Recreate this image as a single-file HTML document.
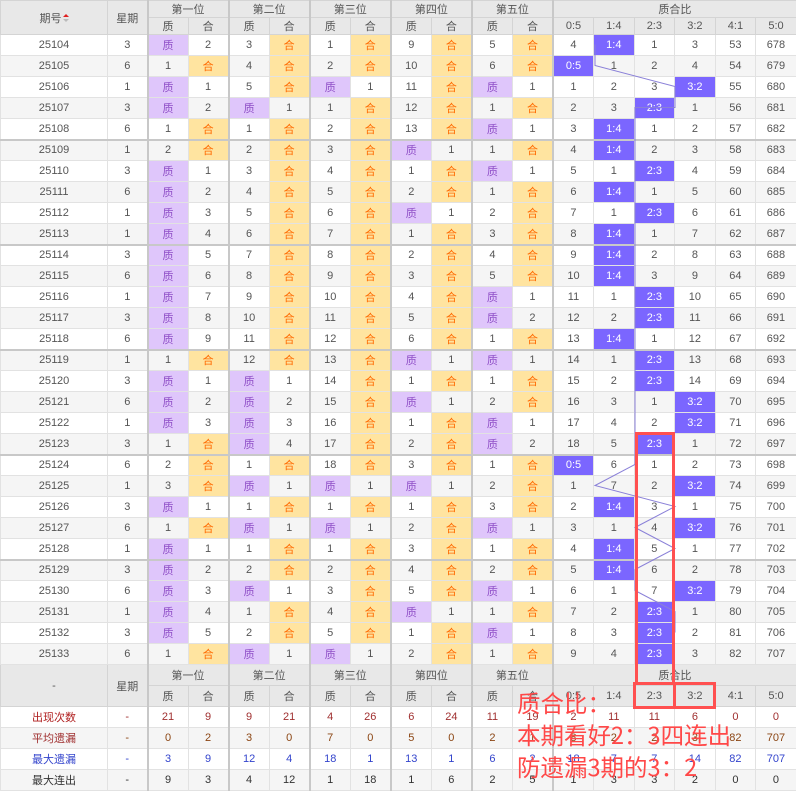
<!DOCTYPE html>
<html><head><meta charset="utf-8">
<style>
*{margin:0;padding:0;box-sizing:border-box}
body{width:796px;height:790px;background:#fff;overflow:hidden;position:relative;font-family:"Liberation Sans","Noto Sans CJK SC",sans-serif;font-size:11px;color:#555}
table{border-collapse:collapse;table-layout:fixed;width:796px;position:absolute;left:0;top:0}
td,th{text-align:center;vertical-align:middle;border:1px solid #e2e2e2;height:21px;font-weight:normal;white-space:nowrap;overflow:hidden;padding:0}
thead th,.fh th{background:#e8e8e8;border-color:#d4d4d4;height:17px;color:#555}
.fh th{height:21px}
tbody tr:nth-child(even) td{background:#f5f5f5}
tbody tr td.z{background:#dfc6fb;color:#9050c8}
tbody tr td.h{background:#ffe4a0;color:#ff6a00}
tbody tr td.r{background:#7b66ff;color:#fff}
tr.g td{border-top:2px solid #c8c8c8}
td.b,th.b{border-left:2px solid #c8c8c8}
.st td{height:21px}
.c1 td{color:#a03030}.c2 td{color:#8b4513}.c3 td{color:#3344cc}.c4 td{color:#333}
.c1 td:first-child{color:#b02020}.c2 td:first-child{color:#a03030}.c3 td:first-child{color:#3344cc}
.arr{display:inline-block;vertical-align:middle;margin-left:1px;width:6px;height:9px;position:relative}
.arr:before{content:"";position:absolute;left:0;top:0;border:3px solid transparent;border-bottom:3px solid #e02020;border-top:0}
.arr:after{content:"";position:absolute;left:0;top:5px;border:3px solid transparent;border-top:3px solid #bbb;border-bottom:0}
.note{position:absolute;left:517px;top:686px;color:#ff4848;font-size:23.5px;line-height:32px;font-family:"Noto Sans CJK SC",sans-serif;white-space:nowrap}
</style></head><body>
<table>
<colgroup><col style="width:107px"><col style="width:40px"><col span="16" style="width:40.56px"></colgroup>
<thead>
<tr><th rowspan="2">期号<span class="arr"></span></th><th rowspan="2">星期</th><th colspan="2" class="b">第一位</th><th colspan="2" class="b">第二位</th><th colspan="2" class="b">第三位</th><th colspan="2" class="b">第四位</th><th colspan="2" class="b">第五位</th><th colspan="6" class="b">质合比</th></tr>
<tr><th class="b">质</th><th>合</th><th class="b">质</th><th>合</th><th class="b">质</th><th>合</th><th class="b">质</th><th>合</th><th class="b">质</th><th>合</th><th class="b">0:5</th><th>1:4</th><th>2:3</th><th>3:2</th><th>4:1</th><th>5:0</th></tr>
</thead>
<tbody>
<tr><td>25104</td><td>3</td><td class="z b">质</td><td>2</td><td class="b">3</td><td class="h">合</td><td class="b">1</td><td class="h">合</td><td class="b">9</td><td class="h">合</td><td class="b">5</td><td class="h">合</td><td class="b">4</td><td class="r">1:4</td><td>1</td><td>3</td><td>53</td><td>678</td></tr>
<tr><td>25105</td><td>6</td><td class="b">1</td><td class="h">合</td><td class="b">4</td><td class="h">合</td><td class="b">2</td><td class="h">合</td><td class="b">10</td><td class="h">合</td><td class="b">6</td><td class="h">合</td><td class="r b">0:5</td><td>1</td><td>2</td><td>4</td><td>54</td><td>679</td></tr>
<tr><td>25106</td><td>1</td><td class="z b">质</td><td>1</td><td class="b">5</td><td class="h">合</td><td class="z b">质</td><td>1</td><td class="b">11</td><td class="h">合</td><td class="z b">质</td><td>1</td><td class="b">1</td><td>2</td><td>3</td><td class="r">3:2</td><td>55</td><td>680</td></tr>
<tr><td>25107</td><td>3</td><td class="z b">质</td><td>2</td><td class="z b">质</td><td>1</td><td class="b">1</td><td class="h">合</td><td class="b">12</td><td class="h">合</td><td class="b">1</td><td class="h">合</td><td class="b">2</td><td>3</td><td class="r">2:3</td><td>1</td><td>56</td><td>681</td></tr>
<tr><td>25108</td><td>6</td><td class="b">1</td><td class="h">合</td><td class="b">1</td><td class="h">合</td><td class="b">2</td><td class="h">合</td><td class="b">13</td><td class="h">合</td><td class="z b">质</td><td>1</td><td class="b">3</td><td class="r">1:4</td><td>1</td><td>2</td><td>57</td><td>682</td></tr>
<tr class="g"><td>25109</td><td>1</td><td class="b">2</td><td class="h">合</td><td class="b">2</td><td class="h">合</td><td class="b">3</td><td class="h">合</td><td class="z b">质</td><td>1</td><td class="b">1</td><td class="h">合</td><td class="b">4</td><td class="r">1:4</td><td>2</td><td>3</td><td>58</td><td>683</td></tr>
<tr><td>25110</td><td>3</td><td class="z b">质</td><td>1</td><td class="b">3</td><td class="h">合</td><td class="b">4</td><td class="h">合</td><td class="b">1</td><td class="h">合</td><td class="z b">质</td><td>1</td><td class="b">5</td><td>1</td><td class="r">2:3</td><td>4</td><td>59</td><td>684</td></tr>
<tr><td>25111</td><td>6</td><td class="z b">质</td><td>2</td><td class="b">4</td><td class="h">合</td><td class="b">5</td><td class="h">合</td><td class="b">2</td><td class="h">合</td><td class="b">1</td><td class="h">合</td><td class="b">6</td><td class="r">1:4</td><td>1</td><td>5</td><td>60</td><td>685</td></tr>
<tr><td>25112</td><td>1</td><td class="z b">质</td><td>3</td><td class="b">5</td><td class="h">合</td><td class="b">6</td><td class="h">合</td><td class="z b">质</td><td>1</td><td class="b">2</td><td class="h">合</td><td class="b">7</td><td>1</td><td class="r">2:3</td><td>6</td><td>61</td><td>686</td></tr>
<tr><td>25113</td><td>1</td><td class="z b">质</td><td>4</td><td class="b">6</td><td class="h">合</td><td class="b">7</td><td class="h">合</td><td class="b">1</td><td class="h">合</td><td class="b">3</td><td class="h">合</td><td class="b">8</td><td class="r">1:4</td><td>1</td><td>7</td><td>62</td><td>687</td></tr>
<tr class="g"><td>25114</td><td>3</td><td class="z b">质</td><td>5</td><td class="b">7</td><td class="h">合</td><td class="b">8</td><td class="h">合</td><td class="b">2</td><td class="h">合</td><td class="b">4</td><td class="h">合</td><td class="b">9</td><td class="r">1:4</td><td>2</td><td>8</td><td>63</td><td>688</td></tr>
<tr><td>25115</td><td>6</td><td class="z b">质</td><td>6</td><td class="b">8</td><td class="h">合</td><td class="b">9</td><td class="h">合</td><td class="b">3</td><td class="h">合</td><td class="b">5</td><td class="h">合</td><td class="b">10</td><td class="r">1:4</td><td>3</td><td>9</td><td>64</td><td>689</td></tr>
<tr><td>25116</td><td>1</td><td class="z b">质</td><td>7</td><td class="b">9</td><td class="h">合</td><td class="b">10</td><td class="h">合</td><td class="b">4</td><td class="h">合</td><td class="z b">质</td><td>1</td><td class="b">11</td><td>1</td><td class="r">2:3</td><td>10</td><td>65</td><td>690</td></tr>
<tr><td>25117</td><td>3</td><td class="z b">质</td><td>8</td><td class="b">10</td><td class="h">合</td><td class="b">11</td><td class="h">合</td><td class="b">5</td><td class="h">合</td><td class="z b">质</td><td>2</td><td class="b">12</td><td>2</td><td class="r">2:3</td><td>11</td><td>66</td><td>691</td></tr>
<tr><td>25118</td><td>6</td><td class="z b">质</td><td>9</td><td class="b">11</td><td class="h">合</td><td class="b">12</td><td class="h">合</td><td class="b">6</td><td class="h">合</td><td class="b">1</td><td class="h">合</td><td class="b">13</td><td class="r">1:4</td><td>1</td><td>12</td><td>67</td><td>692</td></tr>
<tr class="g"><td>25119</td><td>1</td><td class="b">1</td><td class="h">合</td><td class="b">12</td><td class="h">合</td><td class="b">13</td><td class="h">合</td><td class="z b">质</td><td>1</td><td class="z b">质</td><td>1</td><td class="b">14</td><td>1</td><td class="r">2:3</td><td>13</td><td>68</td><td>693</td></tr>
<tr><td>25120</td><td>3</td><td class="z b">质</td><td>1</td><td class="z b">质</td><td>1</td><td class="b">14</td><td class="h">合</td><td class="b">1</td><td class="h">合</td><td class="b">1</td><td class="h">合</td><td class="b">15</td><td>2</td><td class="r">2:3</td><td>14</td><td>69</td><td>694</td></tr>
<tr><td>25121</td><td>6</td><td class="z b">质</td><td>2</td><td class="z b">质</td><td>2</td><td class="b">15</td><td class="h">合</td><td class="z b">质</td><td>1</td><td class="b">2</td><td class="h">合</td><td class="b">16</td><td>3</td><td>1</td><td class="r">3:2</td><td>70</td><td>695</td></tr>
<tr><td>25122</td><td>1</td><td class="z b">质</td><td>3</td><td class="z b">质</td><td>3</td><td class="b">16</td><td class="h">合</td><td class="b">1</td><td class="h">合</td><td class="z b">质</td><td>1</td><td class="b">17</td><td>4</td><td>2</td><td class="r">3:2</td><td>71</td><td>696</td></tr>
<tr><td>25123</td><td>3</td><td class="b">1</td><td class="h">合</td><td class="z b">质</td><td>4</td><td class="b">17</td><td class="h">合</td><td class="b">2</td><td class="h">合</td><td class="z b">质</td><td>2</td><td class="b">18</td><td>5</td><td class="r">2:3</td><td>1</td><td>72</td><td>697</td></tr>
<tr class="g"><td>25124</td><td>6</td><td class="b">2</td><td class="h">合</td><td class="b">1</td><td class="h">合</td><td class="b">18</td><td class="h">合</td><td class="b">3</td><td class="h">合</td><td class="b">1</td><td class="h">合</td><td class="r b">0:5</td><td>6</td><td>1</td><td>2</td><td>73</td><td>698</td></tr>
<tr><td>25125</td><td>1</td><td class="b">3</td><td class="h">合</td><td class="z b">质</td><td>1</td><td class="z b">质</td><td>1</td><td class="z b">质</td><td>1</td><td class="b">2</td><td class="h">合</td><td class="b">1</td><td>7</td><td>2</td><td class="r">3:2</td><td>74</td><td>699</td></tr>
<tr><td>25126</td><td>3</td><td class="z b">质</td><td>1</td><td class="b">1</td><td class="h">合</td><td class="b">1</td><td class="h">合</td><td class="b">1</td><td class="h">合</td><td class="b">3</td><td class="h">合</td><td class="b">2</td><td class="r">1:4</td><td>3</td><td>1</td><td>75</td><td>700</td></tr>
<tr><td>25127</td><td>6</td><td class="b">1</td><td class="h">合</td><td class="z b">质</td><td>1</td><td class="z b">质</td><td>1</td><td class="b">2</td><td class="h">合</td><td class="z b">质</td><td>1</td><td class="b">3</td><td>1</td><td>4</td><td class="r">3:2</td><td>76</td><td>701</td></tr>
<tr><td>25128</td><td>1</td><td class="z b">质</td><td>1</td><td class="b">1</td><td class="h">合</td><td class="b">1</td><td class="h">合</td><td class="b">3</td><td class="h">合</td><td class="b">1</td><td class="h">合</td><td class="b">4</td><td class="r">1:4</td><td>5</td><td>1</td><td>77</td><td>702</td></tr>
<tr class="g"><td>25129</td><td>3</td><td class="z b">质</td><td>2</td><td class="b">2</td><td class="h">合</td><td class="b">2</td><td class="h">合</td><td class="b">4</td><td class="h">合</td><td class="b">2</td><td class="h">合</td><td class="b">5</td><td class="r">1:4</td><td>6</td><td>2</td><td>78</td><td>703</td></tr>
<tr><td>25130</td><td>6</td><td class="z b">质</td><td>3</td><td class="z b">质</td><td>1</td><td class="b">3</td><td class="h">合</td><td class="b">5</td><td class="h">合</td><td class="z b">质</td><td>1</td><td class="b">6</td><td>1</td><td>7</td><td class="r">3:2</td><td>79</td><td>704</td></tr>
<tr><td>25131</td><td>1</td><td class="z b">质</td><td>4</td><td class="b">1</td><td class="h">合</td><td class="b">4</td><td class="h">合</td><td class="z b">质</td><td>1</td><td class="b">1</td><td class="h">合</td><td class="b">7</td><td>2</td><td class="r">2:3</td><td>1</td><td>80</td><td>705</td></tr>
<tr><td>25132</td><td>3</td><td class="z b">质</td><td>5</td><td class="b">2</td><td class="h">合</td><td class="b">5</td><td class="h">合</td><td class="b">1</td><td class="h">合</td><td class="z b">质</td><td>1</td><td class="b">8</td><td>3</td><td class="r">2:3</td><td>2</td><td>81</td><td>706</td></tr>
<tr><td>25133</td><td>6</td><td class="b">1</td><td class="h">合</td><td class="z b">质</td><td>1</td><td class="z b">质</td><td>1</td><td class="b">2</td><td class="h">合</td><td class="b">1</td><td class="h">合</td><td class="b">9</td><td>4</td><td class="r">2:3</td><td>3</td><td>82</td><td>707</td></tr>
</tbody>
<tbody class="fh">
<tr><th rowspan="2">-</th><th rowspan="2">星期</th><th colspan="2" class="b">第一位</th><th colspan="2" class="b">第二位</th><th colspan="2" class="b">第三位</th><th colspan="2" class="b">第四位</th><th colspan="2" class="b">第五位</th><th colspan="6" class="b">质合比</th></tr>
<tr><th class="b">质</th><th>合</th><th class="b">质</th><th>合</th><th class="b">质</th><th>合</th><th class="b">质</th><th>合</th><th class="b">质</th><th>合</th><th class="b">0:5</th><th>1:4</th><th>2:3</th><th>3:2</th><th>4:1</th><th>5:0</th></tr>
</tbody>
<tbody class="st">
<tr class="c1"><td>出现次数</td><td>-</td><td class="b">21</td><td>9</td><td class="b">9</td><td>21</td><td class="b">4</td><td>26</td><td class="b">6</td><td>24</td><td class="b">11</td><td>19</td><td class="b">2</td><td>11</td><td>11</td><td>6</td><td>0</td><td>0</td></tr>
<tr class="c2"><td>平均遗漏</td><td>-</td><td class="b">0</td><td>2</td><td class="b">3</td><td>0</td><td class="b">7</td><td>0</td><td class="b">5</td><td>0</td><td class="b">2</td><td>1</td><td class="b">8</td><td>2</td><td>2</td><td>3</td><td>82</td><td>707</td></tr>
<tr class="c3"><td>最大遗漏</td><td>-</td><td class="b">3</td><td>9</td><td class="b">12</td><td>4</td><td class="b">18</td><td>1</td><td class="b">13</td><td>1</td><td class="b">6</td><td>2</td><td class="b">18</td><td>7</td><td>7</td><td>14</td><td>82</td><td>707</td></tr>
<tr class="c4"><td>最大连出</td><td>-</td><td class="b">9</td><td>3</td><td class="b">4</td><td>12</td><td class="b">1</td><td>18</td><td class="b">1</td><td>6</td><td class="b">2</td><td>5</td><td class="b">1</td><td>3</td><td>3</td><td>2</td><td>0</td><td>0</td></tr>
</tbody>
</table>
<svg width="796" height="790" style="position:absolute;left:0;top:0;pointer-events:none">
<polyline fill="none" stroke="#8a80d8" stroke-width="1" points="595,44.5 595,65.5 675,86.5 675,107.5 635,107.5 635,464.5 595,485.5 675,506.5 635,527.5 675,548.5 635,569.5 635,590.5 675,611.5 675,632.5"/>
<g fill="none" stroke="#ff5050" stroke-width="3">
<rect x="636.5" y="433.5" width="37" height="250"/>
<rect x="634.5" y="683.5" width="80" height="24"/>
<line x1="674.5" y1="683" x2="674.5" y2="708"/>
</g>
</svg>
<div class="note">质合比：<br>本期看好2：3四连出<br>防遗漏3期的3：2</div>
</body></html>
